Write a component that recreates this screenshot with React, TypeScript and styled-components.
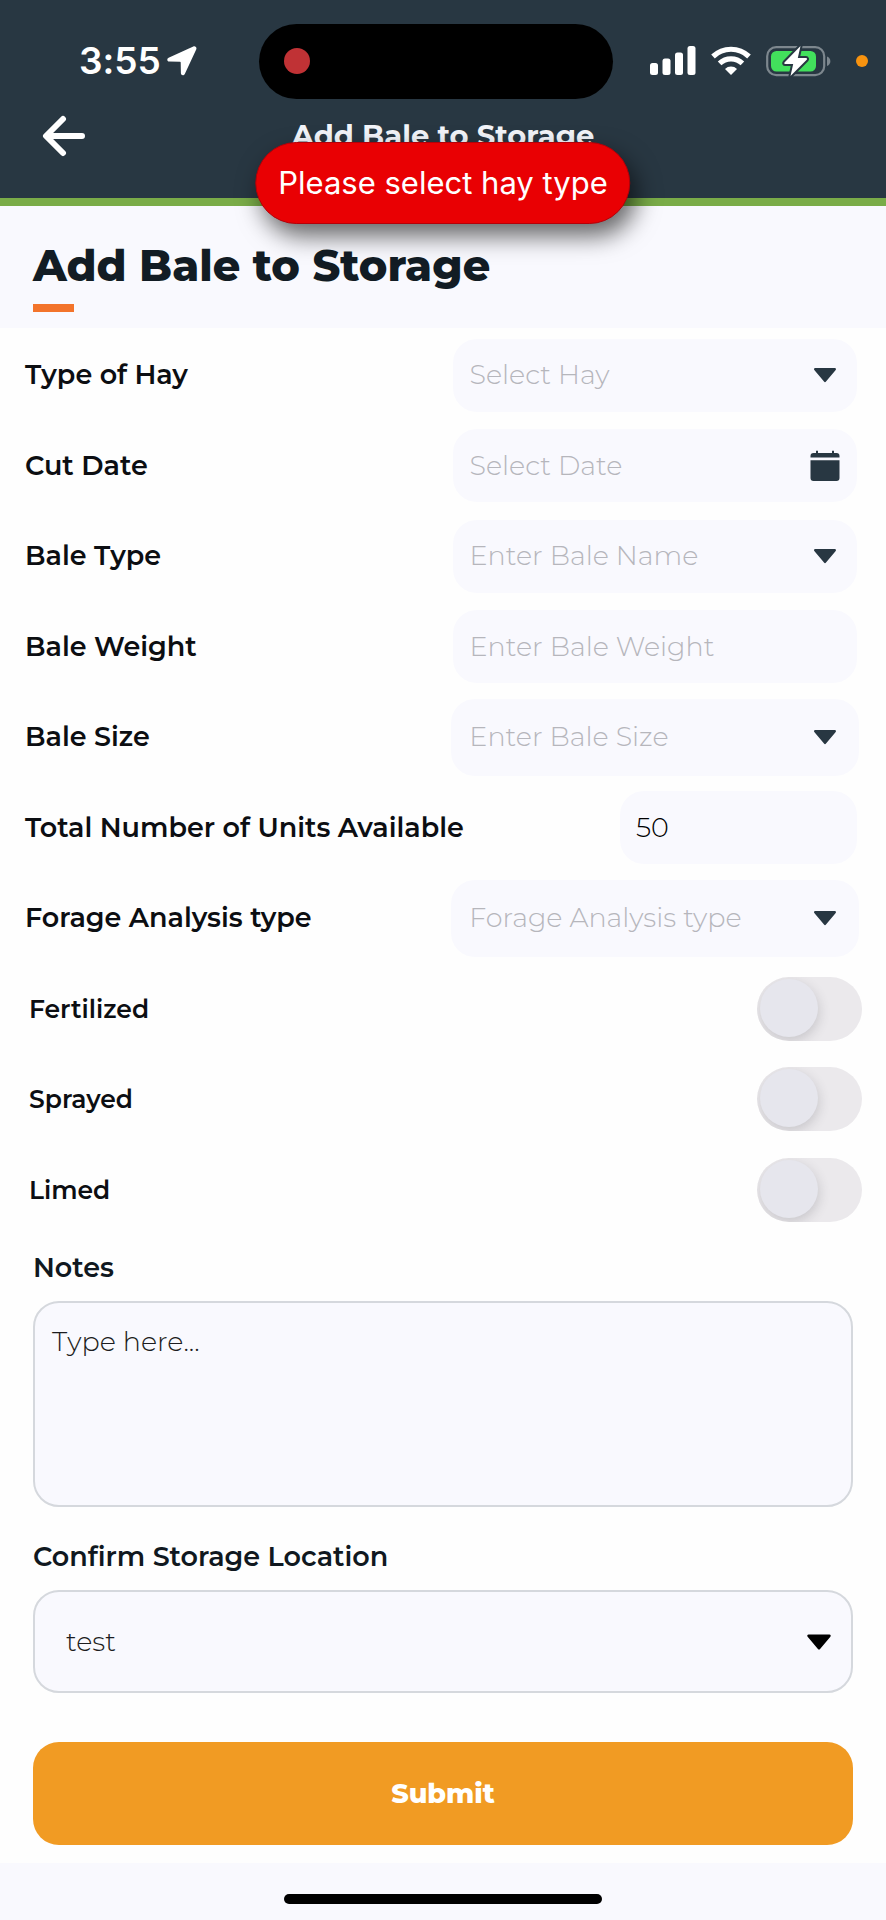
import React, { useState } from "react";
import styled, { createGlobalStyle } from "styled-components";

const slate = "#283742";
const surface = "#f9f9fe";
const ink = "#0c0e12";

const GlobalStyle = createGlobalStyle`
  *, *::before, *::after { box-sizing: border-box; }
  body { margin: 0; background: ${surface}; font-variant-ligatures: none; }
  body, button, input, select, textarea {
    font-family: Montserrat, Inter, "Liberation Sans", sans-serif;
  }
`;

const Screen = styled.div`
  position: relative;
  min-height: 100vh;
  display: flex;
  flex-direction: column;
  background: ${surface};
`;

const Header = styled.header`
  background: ${slate};
  border-bottom: 8px solid #7aac48;
  padding-bottom: 36px;
`;

const StatusBar = styled.div`
  display: grid;
  grid-template-columns: 259fr 354px 273fr;
  align-items: center;
  height: 110px;
  padding-bottom: 10px;
  padding-top: 22px;
`;

const Clock = styled.div`
  display: flex;
  align-items: center;
  gap: 6px;
  padding-left: 79px;
  color: #fff;
  font-family: Inter, "Liberation Sans", sans-serif;
  font-size: 37px;
  line-height: 40px;
  font-weight: 600;
`;

const Island = styled.div`
  display: flex;
  align-items: center;
  height: 75px;
  padding-left: 25px;
  border-radius: 38px;
  background: #000;
`;

const RecordDot = styled.span`
  width: 26px;
  height: 26px;
  border-radius: 50%;
  background: #c03235;
`;

const StatusIcons = styled.div`
  display: flex;
  align-items: center;
  gap: 15px;
  padding-left: 37px;
`;

const MicDot = styled.span`
  width: 12px;
  height: 12px;
  margin-left: 9px;
  border-radius: 50%;
  background: #f8930f;
`;

const NavBar = styled.div`
  display: grid;
  grid-template-columns: 60px 1fr 60px;
  align-items: center;
  height: 52px;
  padding: 0 34px;
`;

const BackButton = styled.button`
  display: flex;
  align-items: center;
  height: 52px;
  padding: 0 8px;
  border: 0;
  background: none;
  color: #fff;
`;

const NavTitle = styled.div`
  color: #f3f5fa;
  font-size: 29px;
  line-height: 36px;
  font-weight: 700;
  text-align: center;
`;

const Toast = styled.div`
  position: absolute;
  top: 142px;
  left: 50%;
  transform: translateX(-50%);
  padding: 21px 22px;
  border: 1px solid #b40008;
  border-radius: 41px;
  background: #e90003;
  box-shadow: 6px 12px 24px rgba(0, 0, 0, 0.6);
  color: #fff;
  font-family: Inter, "Liberation Sans", sans-serif;
  font-size: 31px;
  line-height: 38px;
  white-space: nowrap;
`;

const TitleBand = styled.div`
  padding: 34px 33px 16px;

  &::after {
    content: "";
    display: block;
    width: 41px;
    height: 8px;
    margin-top: 12px;
    background: #f3742b;
  }
`;

const PageTitle = styled.h1`
  margin: 0;
  color: #121c24;
  font-size: 43px;
  line-height: 52px;
  font-weight: 800;
`;

const Form = styled.form`
  display: flex;
  flex-direction: column;
  padding-bottom: 18px;
  background: #fefefe;
`;

const Rows = styled.div`
  display: grid;
  grid-auto-rows: 1fr;
  min-height: 907px;
  padding: 2px 25px 0;
`;

const Row = styled.div<{ $inset?: boolean }>`
  display: flex;
  align-items: center;
  justify-content: space-between;
  padding: ${(p) => (p.$inset ? "0 0 0 4px" : "0 4px 0 0")};
  margin-right: ${(p) => (p.$inset ? "-1px" : "0")};
`;

const RowLabel = styled.label<{ $small?: boolean }>`
  color: ${ink};
  font-size: ${(p) => (p.$small ? "25px" : "27px")};
  line-height: 36px;
  font-weight: 600;
`;

const Control = styled.div<{ $narrow?: boolean; $tall?: boolean }>`
  display: grid;
  align-items: center;
  flex: none;
  width: ${(p) => (p.$narrow ? "237px" : p.$tall ? "49%" : "48.5%")};
  height: ${(p) => (p.$tall ? "77px" : "73px")};
  margin-right: ${(p) => (p.$tall ? "-2px" : "0")};
  border-radius: 24px;
  background: ${surface};

  > * { grid-area: 1 / 1; }
  > svg {
    justify-self: end;
    margin-right: ${(p) => (p.$tall ? "18px" : "16px")};
    pointer-events: none;
  }
`;

const field = `
  appearance: none;
  width: 100%;
  height: 100%;
  margin: 0;
  border: 0;
  outline: 0;
  background: none;
  font-size: 27px;
  line-height: 36px;
  font-weight: 300;
`;

const Input = styled.input`
  ${field}
  padding: 0 16px;
  color: #000;
  &::placeholder { color: #b6b6bc; opacity: 1; }
`;

const Select = styled.select<{ $tall?: boolean }>`
  ${field}
  padding: 0 56px 0 ${(p) => (p.$tall ? "18px" : "16px")};
  color: #b6b6bc;
`;

const Switch = styled.input`
  appearance: none;
  width: 105px;
  height: 64px;
  margin: 0;
  padding: 2px 3px;
  border-radius: 32px;
  background: #ebe9ec;
  overflow: hidden;

  &::before {
    content: "";
    display: block;
    width: 58px;
    height: 58px;
    border-radius: 50%;
    background: #e6e6ed;
    box-shadow: 1px 4px 12px rgba(60, 60, 70, 0.2);
  }
  &:checked::before { margin-left: auto; }
`;

const Block = styled.div`
  display: flex;
  flex-direction: column;
  gap: 15px;
  padding: 15px 33px 0;

  & + & { padding-top: 32px; }
`;

const BlockLabel = styled.label`
  color: #101820;
  font-size: 27px;
  line-height: 36px;
  font-weight: 600;
`;

const Notes = styled.textarea`
  ${field}
  display: block;
  height: 206px;
  padding: 21px 17px;
  resize: none;
  border: 2px solid #d5d8dd;
  border-radius: 26px;
  background: ${surface};
  color: #222;
  &::placeholder { color: #1c1c20; opacity: 1; }
`;

const LocationControl = styled.div`
  display: grid;
  align-items: center;
  height: 103px;
  border: 2px solid #d5d8dd;
  border-radius: 26px;
  background: ${surface};

  > * { grid-area: 1 / 1; }
  > svg { justify-self: end; margin-right: 15px; pointer-events: none; }
`;

const LocationSelect = styled.select`
  ${field}
  padding: 0 60px 0 31px;
  color: #1c1c20;
`;

const Submit = styled.button`
  height: 103px;
  margin: 49px 33px 0;
  border: 0;
  border-radius: 26px;
  background: #f19b23;
  color: #fff;
  font-size: 27px;
  line-height: 36px;
  font-weight: 800;
`;

const HomeArea = styled.div`
  display: flex;
  justify-content: center;
  padding: 31px 0 17px;
`;

const HomeIndicator = styled.div`
  width: 36%;
  height: 10px;
  border-radius: 5px;
  background: #000;
`;

const Caret = ({ size = 22, color = slate }: { size?: number; color?: string }) => (
  <svg width={size + 10} height={size} viewBox="0 0 32 22" fill={color} aria-hidden="true">
    <path d="M6.2 4h19.6c1.2 0 1.600 1.200.9 2L17 17.600c-.6.7-1.400.7-2 0L5.300 6c-.7-.8-.3-2 .9-2z" />
  </svg>
);

const CalendarIcon = () => (
  <svg width="32" height="32" viewBox="0 0 32 32" fill={slate} aria-hidden="true">
    <path d="M7 .8h2V3h14V.8h2V3h2.500A3 3 0 0 1 30.500 6v1.500h-29V6a3 3 0 0 1 3-3H7z" />
    <path d="M1.500 10.200h29V28a3 3 0 0 1-3 3h-23a3 3 0 0 1-3-3z" />
  </svg>
);

const LocationArrow = () => (
  <svg width="30" height="30" viewBox="0 0 30 30" fill="#fff" aria-hidden="true">
    <path d="M26.300.5 1.600 11.800C-.4 12.800 0 15.500 2.200 15.600L13 15.800c.5 0 .7.2.7.7l.2 10.800c.1 2.200 2.900 2.700 3.900.6L29.200 3.500c.9-2-.9-3.900-2.900-3z" />
  </svg>
);

const Signal = () => (
  <svg width="46" height="30" viewBox="0 0 46 30" fill="#fff" aria-hidden="true">
    <rect x="0" y="17" width="8" height="12" rx="2.500" />
    <rect x="12.500" y="12.500" width="8" height="16.500" rx="2.500" />
    <rect x="25" y="6.500" width="8" height="22.500" rx="2.500" />
    <rect x="37.500" y="0" width="8" height="29" rx="2.500" />
  </svg>
);

const Wifi = () => (
  <svg width="40" height="30" viewBox="0 0 40 30" aria-hidden="true">
    <g fill="none" stroke="#fff" strokeWidth="5.200">
      <path d="M2 10.500a26 26 0 0 1 36 0" />
      <path d="M8.600 17.400a16.500 16.500 0 0 1 22.800 0" />
    </g>
    <path d="M20 29l-6-6.100a8.700 8.700 0 0 1 12 0z" fill="#fff" />
  </svg>
);

const Battery = () => (
  <svg width="66" height="34" viewBox="0 0 66 34" aria-hidden="true">
    <rect x="1.200" y="3.200" width="57" height="28" rx="9" fill="none" stroke="#7d878e" strokeWidth="2.200" />
    <path d="M61 12.500c4.500 1.500 4.500 8 0 9.500z" fill="#7d878e" />
    <rect x="5" y="7" width="45" height="20.500" rx="5.500" fill="#42e05c" />
    <path
      d="M34.500 2 18.500 18.500c-.6.700-.2 1.500.7 1.500h8L24.500 32 40.700 15.800c.7-.7.300-1.700-.7-1.700h-8.200z"
      fill="#fff"
      stroke={slate}
      strokeWidth="4"
      strokeLinejoin="round"
      paintOrder="stroke"
    />
  </svg>
);

const BackArrow = () => (
  <svg width="44" height="42" viewBox="0 0 44 42" fill="none" stroke="currentColor" strokeWidth="6" strokeLinecap="round" strokeLinejoin="round" aria-hidden="true">
    <path d="M21 4 4 21l17 17M5 21h35" />
  </svg>
);

type SelectRowProps = { id: string; label: string; hint: string; tall?: boolean };

const SelectRow = ({ id, label, hint, tall }: SelectRowProps) => (
  <Row>
    <RowLabel htmlFor={id}>{label}</RowLabel>
    <Control $tall={tall}>
      <Select id={id} $tall={tall} defaultValue="">
        <option value="">{hint}</option>
      </Select>
      <Caret />
    </Control>
  </Row>
);

const SwitchRow = ({ id, label }: { id: string; label: string }) => (
  <Row $inset>
    <RowLabel htmlFor={id} $small>{label}</RowLabel>
    <Switch id={id} type="checkbox" role="switch" />
  </Row>
);

export default function App() {
  const [units, setUnits] = useState("50");

  return (
    <Screen>
      <GlobalStyle />
      <Header>
        <StatusBar>
          <Clock>
            <span>3:55</span>
            <LocationArrow />
          </Clock>
          <Island><RecordDot /></Island>
          <StatusIcons>
            <Signal />
            <Wifi />
            <Battery />
            <MicDot />
          </StatusIcons>
        </StatusBar>
        <NavBar>
          <BackButton type="button" aria-label="Back"><BackArrow /></BackButton>
          <NavTitle>Add Bale to Storage</NavTitle>
        </NavBar>
      </Header>
      <Toast role="alert">Please select hay type</Toast>

      <TitleBand>
        <PageTitle>Add Bale to Storage</PageTitle>
      </TitleBand>

      <Form onSubmit={(e) => e.preventDefault()}>
        <Rows>
          <SelectRow id="hay" label="Type of Hay" hint="Select Hay" />
          <Row>
            <RowLabel htmlFor="cut">Cut Date</RowLabel>
            <Control>
              <Input id="cut" placeholder="Select Date" />
              <CalendarIcon />
            </Control>
          </Row>
          <SelectRow id="bale-type" label="Bale Type" hint="Enter Bale Name" />
          <Row>
            <RowLabel htmlFor="weight">Bale Weight</RowLabel>
            <Control>
              <Input id="weight" inputMode="decimal" placeholder="Enter Bale Weight" />
            </Control>
          </Row>
          <SelectRow id="size" label="Bale Size" hint="Enter Bale Size" tall />
          <Row>
            <RowLabel htmlFor="units">Total Number of Units Available</RowLabel>
            <Control $narrow>
              <Input id="units" inputMode="numeric" value={units} onChange={(e) => setUnits(e.target.value)} />
            </Control>
          </Row>
          <SelectRow id="forage" label="Forage Analysis type" hint="Forage Analysis type" tall />
          <SwitchRow id="fertilized" label="Fertilized" />
          <SwitchRow id="sprayed" label="Sprayed" />
          <SwitchRow id="limed" label="Limed" />
        </Rows>

        <Block>
          <BlockLabel htmlFor="notes">Notes</BlockLabel>
          <Notes id="notes" placeholder="Type here..." />
        </Block>
        <Block>
          <BlockLabel htmlFor="location">Confirm Storage Location</BlockLabel>
          <LocationControl>
            <LocationSelect id="location" defaultValue="test">
              <option value="test">test</option>
            </LocationSelect>
            <Caret size={24} color="#000" />
          </LocationControl>
        </Block>
        <Submit type="submit">Submit</Submit>
      </Form>

      <HomeArea><HomeIndicator /></HomeArea>
    </Screen>
  );
}
